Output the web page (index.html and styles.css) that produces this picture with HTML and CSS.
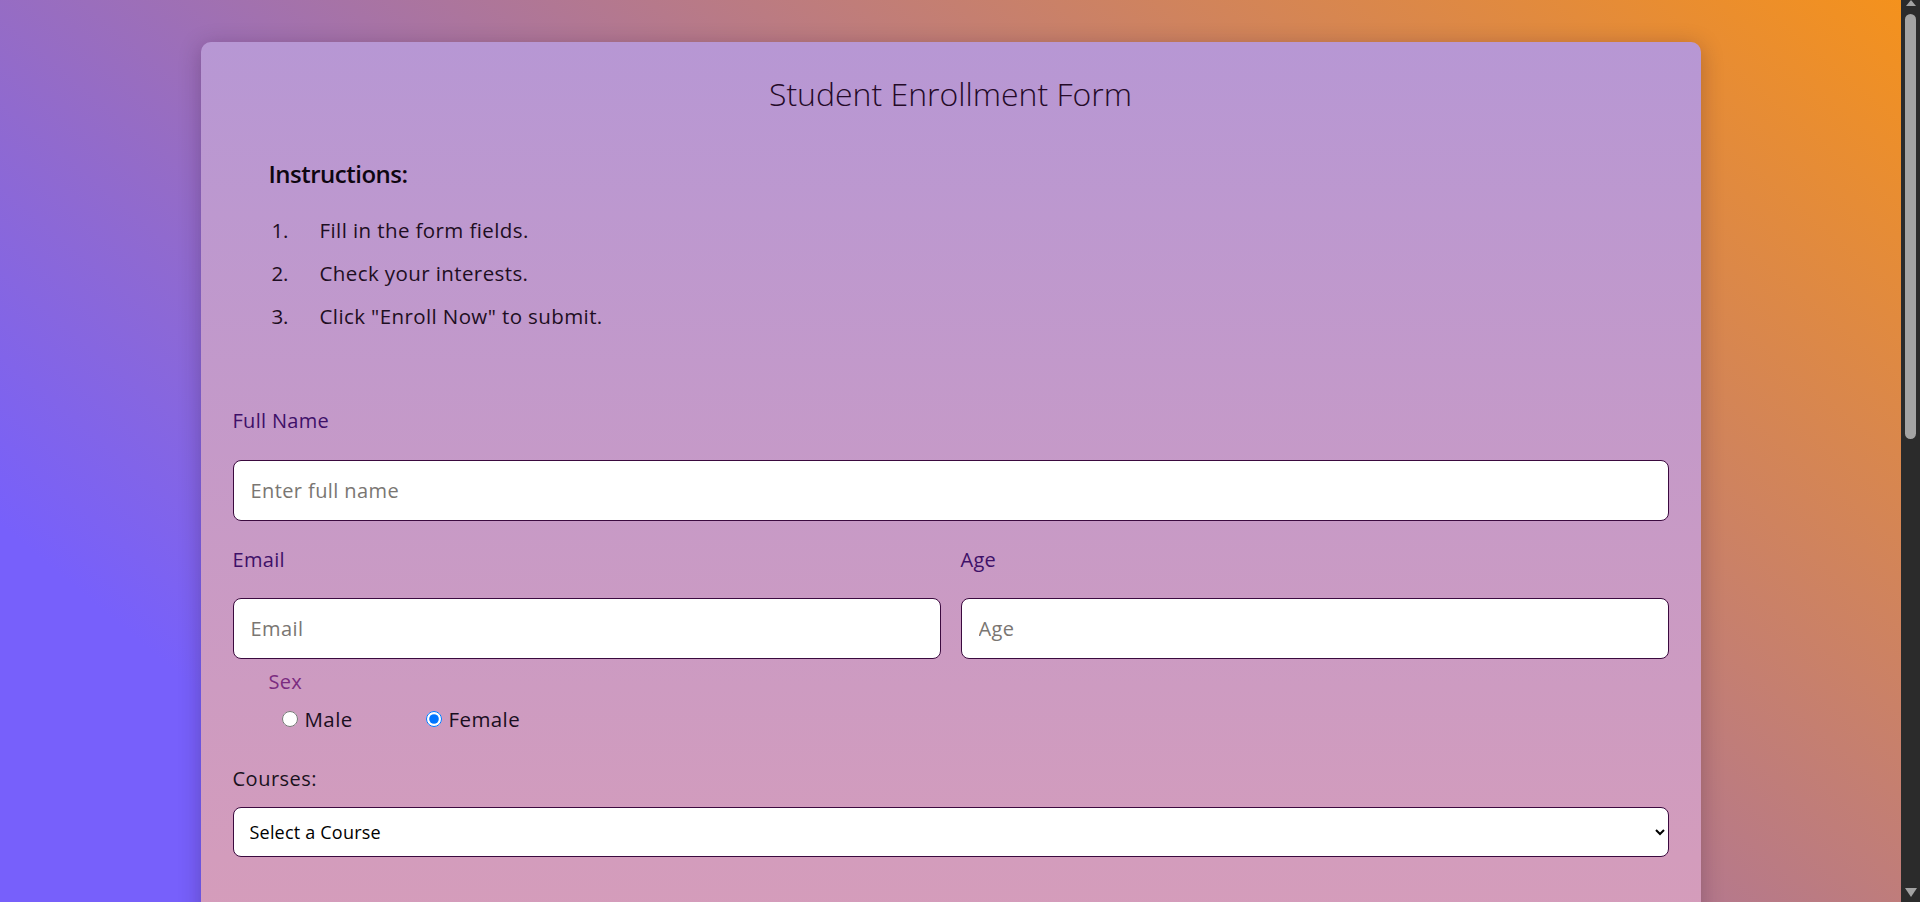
FILE: index.html
```html
<!DOCTYPE html>
<html lang="en">
<head>
<meta charset="utf-8">
<title>Student Enrollment Form</title>
<link rel="stylesheet" href="styles.css">
</head>
<body>
<div class="card">
  <h1 class="title">Student Enrollment Form</h1>
  <div class="instructions">
    <h3 class="instructions-title">Instructions:</h3>
    <ol class="steps">
      <li class="step">Fill in the form fields.</li>
      <li class="step">Check your interests.</li>
      <li class="step">Click "Enroll Now" to submit.</li>
    </ol>
  </div>
  <form class="form">
    <div class="field">
      <label class="label" for="name">Full Name</label>
      <input class="input" id="name" type="text" placeholder="Enter full name">
    </div>
    <div class="row">
      <div class="field">
        <label class="label" for="email">Email</label>
        <input class="input" id="email" type="email" placeholder="Email">
      </div>
      <div class="field">
        <label class="label" for="age">Age</label>
        <input class="input" id="age" type="number" placeholder="Age">
      </div>
    </div>
    <div class="sex">
      <span class="sex-label">Sex</span>
      <div class="radios">
        <label class="opt"><input class="radio" type="radio" name="sex" value="male">Male</label>
        <label class="opt"><input class="radio" type="radio" name="sex" value="female" checked>Female</label>
      </div>
    </div>
    <div class="field courses">
      <label class="courses-label" for="course">Courses:</label>
      <select class="select" id="course">
        <option>Select a Course</option>
      </select>
    </div>
    <div class="below-fold"></div>
  </form>
</div>
<div class="scrollbar" aria-hidden="true">
  <div class="sb-up"></div>
  <div class="sb-thumb"></div>
  <div class="sb-down"></div>
</div>
</body>
</html>
```
FILE: styles.css
```css
html {
  background: linear-gradient(40deg, #7760fb 15%, #f5921b 100%) fixed;
  min-height: 100%;
}
body {
  margin: 0 19px 0 0;
  font-family: "Open Sans", "Noto Sans", sans-serif;
  color: #1e0e22;
}
.scrollbar {
  position: fixed;
  top: 0;
  right: 0;
  width: 19px;
  height: 100vh;
  background: #2b2b2b;
  display: flex;
  flex-direction: column;
  align-items: center;
  z-index: 10;
}
.sb-up {
  width: 0;
  height: 0;
  border-left: 5.5px solid transparent;
  border-right: 5.5px solid transparent;
  border-bottom: 6px solid #a3a3a3;
}
.sb-thumb {
  width: 11px;
  height: 425px;
  margin-top: 8px;
  border-radius: 6px;
  background: #a3a3a3;
}
.sb-down {
  margin-top: auto;
  margin-bottom: 5px;
  width: 0;
  height: 0;
  border-left: 6px solid transparent;
  border-right: 6px solid transparent;
  border-top: 9px solid #a3a3a3;
}
.card {
  width: 1500px;
  box-sizing: border-box;
  margin: 42px auto 40px;
  padding: 34px 32px 40px;
  border-radius: 10px;
  background: linear-gradient(180deg, #b797d4 0px, #d39cbc 816px, #f0a2a2 1760px);
  box-shadow: 0 4px 22px rgba(40, 10, 40, 0.28);
}
.title {
  margin: 0;
  font-size: 32px;
  line-height: 36px;
  font-weight: 300;
  text-align: center;
  color: #240a28;
}
.instructions {
  margin-top: 47px;
  padding-left: 36px;
}
.instructions-title {
  margin: 0;
  font-size: 24px;
  line-height: 30px;
  font-weight: 600;
  letter-spacing: -0.5px;
  color: #0e0610;
}
.steps {
  list-style: none;
  margin: 27px 0 0;
  padding: 0;
  counter-reset: step;
}
.step {
  counter-increment: step;
  display: flex;
  font-size: 20.5px;
  line-height: 28px;
  font-weight: 400;
  letter-spacing: 0.4px;
  color: #1e0e22;
}
.step + .step {
  margin-top: 15px;
}
.step::before {
  content: counter(step) ".";
  width: 20px;
  margin-right: 31px;
  text-align: right;
  letter-spacing: 0;
}
.form {
  margin-top: 77px;
}
.field {
  display: flex;
  flex-direction: column;
}
.label {
  font-size: 20px;
  line-height: 28px;
  font-weight: 400;
  letter-spacing: 0.3px;
  color: #3e1068;
}
.input {
  margin-top: 25px;
  height: 61px;
  box-sizing: border-box;
  padding: 0 17px;
  border: 1px solid #3b0a3f;
  border-radius: 8px;
  background: #fff;
  font-family: "Open Sans", "Noto Sans", sans-serif;
  font-size: 20px;
  font-weight: 400;
  letter-spacing: 0.4px;
  color: #222;
  outline: none;
}
.input::placeholder {
  color: #7a7672;
}
.row {
  margin-top: 25px;
  display: grid;
  grid-template-columns: 1fr 1fr;
  column-gap: 20px;
}
.row .input {
  margin-top: 24px;
}
.sex {
  margin-top: 9px;
  padding-left: 36px;
}
.sex-label {
  display: block;
  font-size: 20px;
  line-height: 28px;
  letter-spacing: 0.3px;
  color: #7b2b80;
}
.radios {
  margin-top: 9px;
  display: flex;
  padding-left: 13px;
}
.opt {
  width: 144px;
  display: inline-flex;
  align-items: center;
  font-size: 20.5px;
  line-height: 28px;
  letter-spacing: 0.4px;
  color: #1a0e1e;
}
.radio {
  width: 16px;
  height: 16px;
  margin: 0 7px 0 0;
}
.courses {
  margin-top: 32px;
}
.courses-label {
  font-size: 20px;
  line-height: 28px;
  letter-spacing: 0.5px;
  color: #1a1220;
}
.select {
  margin-top: 14px;
  height: 50px;
  box-sizing: border-box;
  padding: 0 14px 0 12px;
  border: 1px solid #3b0a3f;
  border-radius: 8px;
  background-color: #fff;
  font-family: "Open Sans", "Noto Sans", sans-serif;
  font-size: 18px;
  letter-spacing: 0.2px;
  color: #000;
}
.below-fold {
  height: 900px;
}
```
